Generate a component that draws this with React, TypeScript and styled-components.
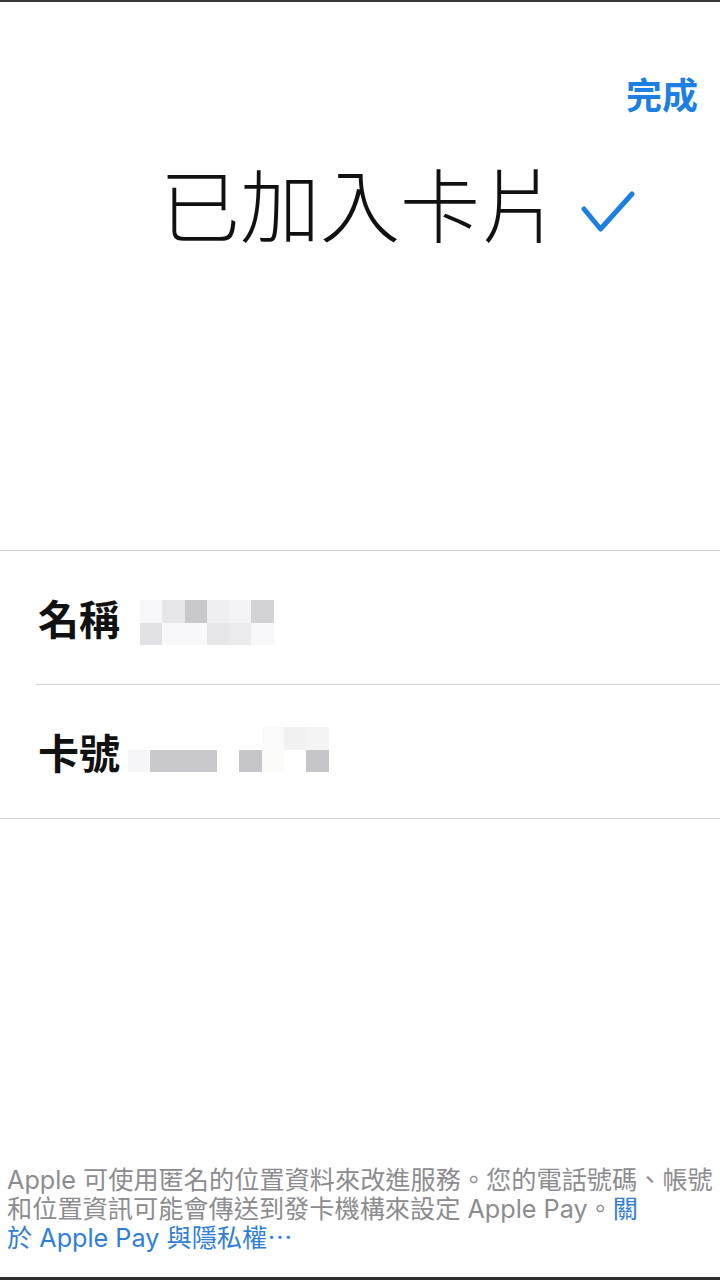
import styled, { createGlobalStyle } from 'styled-components'

const GlobalStyle = createGlobalStyle`
  html, body {
    margin: 0;
    padding: 0;
    background: #ffffff;
  }
  body {
    font-family: "Noto Sans CJK TC", "Noto Sans", sans-serif;
  }
`

const Screen = styled.div`
  width: 720px;
  height: 1280px;
  box-sizing: border-box;
  border-top: 2px solid #3a3a3a;
  border-bottom: 3px solid #2e2e2e;
  display: flex;
  flex-direction: column;
  overflow: hidden;
  background: #fff;
`

const NavBar = styled.div`
  display: flex;
  justify-content: flex-end;
  padding: 70px 22px 0 0;
`

const DoneButton = styled.button`
  border: none;
  background: none;
  padding: 0;
  font-family: "Noto Sans CJK TC", sans-serif;
  font-size: 36px;
  font-weight: 700;
  line-height: 1.2;
  color: #1d7fe2;
`

const TitleRow = styled.div`
  display: grid;
  grid-template-columns: 1fr auto 1fr;
  align-items: center;
  margin-top: 38px;
  height: 96px;
`

const Title = styled.h1`
  grid-column: 2;
  margin: 0;
  font-family: "Noto Sans CJK TC", sans-serif;
  font-size: 80px;
  font-weight: 300;
  line-height: 1;
  color: #111;
`

const CheckWrap = styled.div`
  grid-column: 3;
  padding-left: 21px;
  display: flex;
  align-items: center;
  padding-top: 24px;
`

const InfoList = styled.div`
  margin-top: 301px;
  border-top: 1px solid #d4d4d8;
  border-bottom: 1px solid #d4d4d8;
`

const Row = styled.div<{ $last?: boolean }>`
  display: flex;
  align-items: center;
  height: 133px;
  margin-left: 36px;
  border-bottom: ${(p) => (p.$last ? 'none' : '1px solid #d4d4d8')};
`

const Label = styled.span`
  font-family: "Noto Sans CJK TC", sans-serif;
  font-size: 41px;
  font-weight: 700;
  color: #111;
  line-height: 1;
  padding-left: 2px;
`

const Pixels = styled.div<{ $cols: number; $gap: number; $shift: number }>`
  display: grid;
  grid-template-columns: repeat(${(p) => p.$cols}, 22.3px);
  grid-auto-rows: 22.5px;
  margin-left: ${(p) => p.$gap}px;
  transform: translateY(${(p) => p.$shift}px);
`

const Pixel = styled.div<{ $c: string }>`
  background: ${(p) => p.$c};
`

const Footer = styled.p`
  margin: auto 0 0;
  padding: 0 0 24px 7px;
  font-family: "Inter", "Noto Sans CJK TC", sans-serif;
  font-size: 25.2px;
  line-height: 29px;
  color: #8c8c90;
`

const Link = styled.span`
  color: #2f7ed8;
`

const nameBlur = [
  '#f8f8fa', '#e6e6ea', '#c8c8cc', '#efeff1', '#f3f3f5', '#d2d2d6',
  '#e2e2e6', '#f8f8fa', '#f8f8fa', '#e6e6e8', '#ebebed', '#f8f8fa',
]

const numberBlur = [
  '#fff', '#fff', '#fff', '#fff', '#fff', '#fff', '#fafafa', '#f1f1f2', '#f4f4f5',
  '#f6f6f8', '#c9c9cd', '#c9c9cd', '#c9c9cd', '#fff', '#c6c6ca', '#fbfbf8', '#fff', '#c6c6ca',
]

const Check = () => (
  <svg width="54" height="44" viewBox="0 0 54 44">
    <path
      d="M3 18 L19.5 38 L51 3"
      fill="none"
      stroke="#1d7fe2"
      strokeWidth="5"
      strokeLinecap="round"
      strokeLinejoin="round"
    />
  </svg>
)

const App = () => {
  return (
    <Screen>
      <GlobalStyle />
      <NavBar>
        <DoneButton>完成</DoneButton>
      </NavBar>

      <TitleRow>
        <Title>已加入卡片</Title>
        <CheckWrap>
          <Check />
        </CheckWrap>
      </TitleRow>

      <InfoList>
        <Row>
          <Label>名稱</Label>
          <Pixels $cols={6} $gap={20} $shift={5}>
            {nameBlur.map((c, i) => (
              <Pixel key={i} $c={c} />
            ))}
          </Pixels>
        </Row>
        <Row $last>
          <Label>卡號</Label>
          <Pixels $cols={9} $gap={8} $shift={-2}>
            {numberBlur.map((c, i) => (
              <Pixel key={i} $c={c} />
            ))}
          </Pixels>
        </Row>
      </InfoList>

      <Footer>
        Apple 可使用匿名的位置資料來改進服務。您的電話號碼、帳號
        <br />
        和位置資訊可能會傳送到發卡機構來設定 Apple Pay。<Link>關</Link>
        <br />
        <Link>於 Apple Pay 與隱私權⋯</Link>
      </Footer>
    </Screen>
  )
}

export default App
